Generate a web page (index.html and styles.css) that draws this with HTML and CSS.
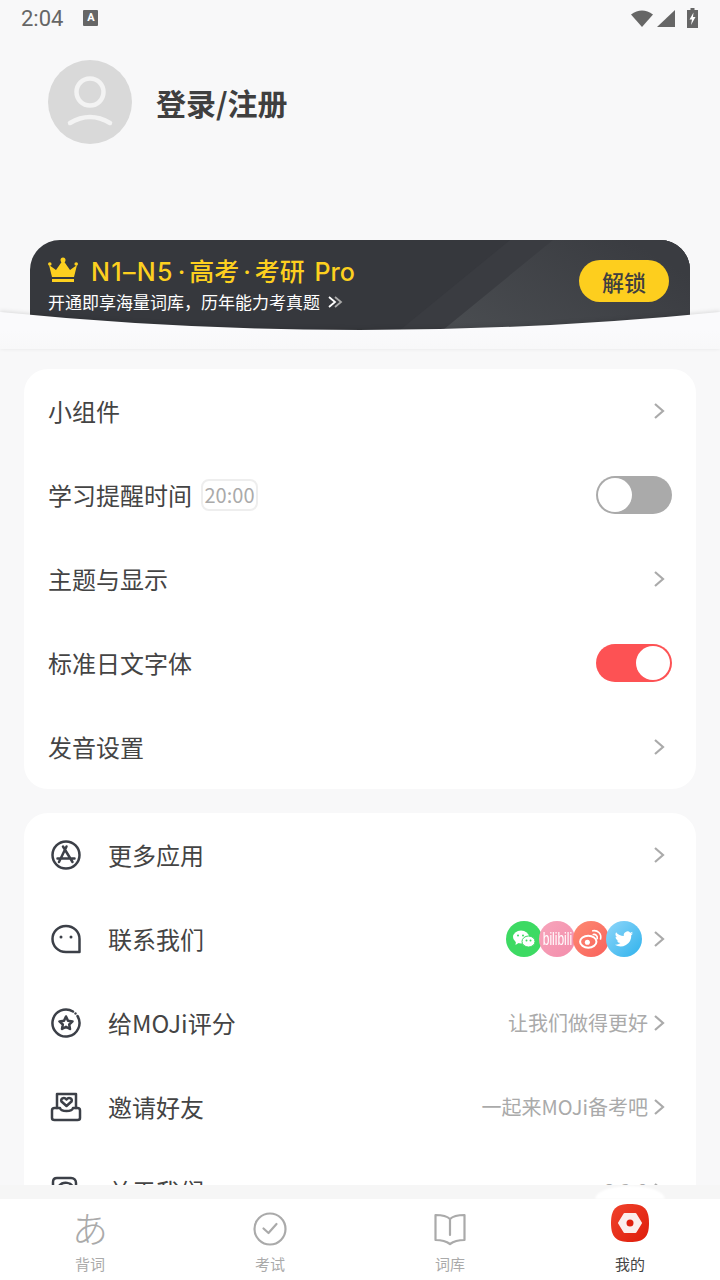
FILE: index.html
```html
<!DOCTYPE html>
<html>
    <head>
        <meta charset="utf-8">
        <title>MOJi</title>
        <link rel="stylesheet" href="styles.css">
    </head>
    <body>
        <div class="page">
            <div class="content">
                <div class="statusbar">
                    <span class="clock">2:04</span>
                    <span class="notify">A</span>
                    <span class="status-icons">
                        <svg width="22" height="17" viewBox="0 0 22 17"><path d="M0 4.500 Q11 -3.500 22 4.500 L11 17 Z" fill="#666"/></svg>
                        <svg class="signal" width="18" height="17" viewBox="0 0 18 17"><path d="M0 17 L18 0 V17 Z" fill="#666"/></svg>
                        <svg width="11" height="20" viewBox="0 0 11 20"><path d="M3.500 0 H7.500 V2 H11 V20 H0 V2 H3.500 Z" fill="#666"/><path d="M6.500 4.500 L2.500 11.500 H5 L4 17 L8.500 9 H6 Z" fill="#fff"/></svg>
                    </span>
                </div>

                <div class="profile">
                    <svg class="avatar" width="84" height="84" viewBox="0 0 84 84">
                        <circle cx="42" cy="42" r="42" fill="#d9d9d9"/>
                        <circle cx="42" cy="32" r="13.500" fill="none" stroke="#f3f3f3" stroke-width="4.500"/>
                        <path d="M22 63 Q42 51 62 63" fill="none" stroke="#f3f3f3" stroke-width="4.500" stroke-linecap="round"/>
                    </svg>
                    <span class="login">登录/注册</span>
                </div>

                <div class="promo-wrap">
                    <div class="promo">
                        <svg class="promo-stripes" width="660" height="90" viewBox="0 0 660 90">
                            <defs>
                                <linearGradient id="stripe" x1="0" y1="1" x2="1" y2="0.400">
                                    <stop offset="0" stop-color="#4a4d51"/>
                                    <stop offset="1" stop-color="#3a3c41"/>
                                </linearGradient>
                            </defs>
                            <polygon points="370,90 480,0 660,0 660,90" fill="#3a3c41"/>
                            <polygon points="413,90 523,0 660,0 660,90" fill="url(#stripe)"/>
                        </svg>
                        <div class="promo-text">
                            <div class="promo-title">
                                <svg width="30" height="26" viewBox="0 0 30 26"><path d="M1 8 L8 13 L15 3 L22 13 L29 8 L26 20 H4 Z" fill="#fdd01f"/><circle cx="15" cy="3" r="2.500" fill="#fdd01f"/><circle cx="1.800" cy="7" r="1.800" fill="#fdd01f"/><circle cx="28.200" cy="7" r="1.800" fill="#fdd01f"/><rect x="4" y="22" width="22" height="3" fill="#fdd01f"/></svg>
                                <span><span class="level">N1–N5</span><span class="sep">·</span>高考<span class="sep">·</span>考研 <span class="pro">Pro</span></span>
                            </div>
                            <div class="promo-sub">
                                <span>开通即享海量词库，历年能力考真题</span>
                                <svg width="16" height="14" viewBox="0 0 16 14"><path d="M2 2 L8 7 L2 12" fill="none" stroke="#fff" stroke-width="1.800"/><path d="M8 2 L14 7 L8 12" fill="none" stroke="#aaa" stroke-width="1.800"/></svg>
                            </div>
                        </div>
                        <div class="unlock">解锁</div>
                    </div>
                    <svg class="promo-curve" width="720" height="37" viewBox="0 0 720 37">
                        <defs>
                            <linearGradient id="curvefade" x1="0" y1="0" x2="0" y2="1">
                                <stop offset="0.500" stop-color="#fafafc"/>
                                <stop offset="1" stop-color="#f8f8f9"/>
                            </linearGradient>
                        </defs>
                        <path d="M0 0 Q360 36 720 0 V37 H0 Z" fill="url(#curvefade)"/>
                    </svg>
                </div>

                <div class="card">
                    <div class="row">
                        <span class="label">小组件</span>
                        <svg class="chevron" width="12" height="18" viewBox="0 0 12 18"><path d="M2 2 L10 9 L2 16"/></svg>
                    </div>
                    <div class="row">
                        <span class="label">学习提醒时间</span>
                        <span class="tag">20:00</span>
                        <span class="toggle"><span class="knob"></span></span>
                    </div>
                    <div class="row">
                        <span class="label">主题与显示</span>
                        <svg class="chevron" width="12" height="18" viewBox="0 0 12 18"><path d="M2 2 L10 9 L2 16"/></svg>
                    </div>
                    <div class="row">
                        <span class="label">标准日文字体</span>
                        <span class="toggle on"><span class="knob"></span></span>
                    </div>
                    <div class="row">
                        <span class="label">发音设置</span>
                        <svg class="chevron" width="12" height="18" viewBox="0 0 12 18"><path d="M2 2 L10 9 L2 16"/></svg>
                    </div>
                </div>

                <div class="card second">
                    <div class="row">
                        <svg class="row-icon" width="36" height="36" viewBox="0 0 36 36">
                            <circle cx="18" cy="18" r="13.500"/>
                            <path d="M18.500 9.500 L11 25 M15 9.500 L24.500 25 M9.500 21.500 H26.500"/>
                        </svg>
                        <span class="label">更多应用</span>
                        <svg class="chevron" width="12" height="18" viewBox="0 0 12 18"><path d="M2 2 L10 9 L2 16"/></svg>
                    </div>
                    <div class="row">
                        <svg class="row-icon" width="36" height="36" viewBox="0 0 36 36">
                            <path d="M18 5 C26 5 31.500 11 31.500 18 V31 H18 C10 31 4.500 25 4.500 18 C4.500 11 10 5 18 5 Z"/>
                            <circle class="dot" cx="13" cy="16" r="1.500"/>
                            <circle class="dot" cx="23" cy="16" r="1.500"/>
                        </svg>
                        <span class="label">联系我们</span>
                        <span class="socials">
                            <span class="social wechat">
                                <svg width="24" height="20" viewBox="0 0 24 20"><ellipse cx="9" cy="8" rx="8" ry="6.500" fill="#fff"/><path d="M4 12 L3.500 16 L8 13 Z" fill="#fff"/><ellipse cx="16.500" cy="12.500" rx="6.500" ry="5.500" fill="#fff" stroke="#3dda63"/><circle cx="14.500" cy="11.500" r="1" fill="#3dda63"/><circle cx="18.500" cy="11.500" r="1" fill="#3dda63"/><circle cx="6" cy="6.500" r="1" fill="#3dda63"/><circle cx="11" cy="6.500" r="1" fill="#3dda63"/></svg>
                            </span>
                            <span class="social bili"><span class="bili-text">bilibili</span></span>
                            <span class="social weibo">
                                <svg width="24" height="20" viewBox="0 0 26 22"><ellipse cx="10" cy="14" rx="9" ry="6.500" fill="none" stroke="#fff" stroke-width="2.200"/><circle cx="9" cy="14.500" r="2.800" fill="#fff"/><path d="M15 2 C20 1 25 5 23.500 11 M15.500 6 C18 5.500 20.500 7.500 19.800 10.500" fill="none" stroke="#fff" stroke-width="1.800" stroke-linecap="round"/></svg>
                            </span>
                            <span class="social twitter">
                                <svg width="24" height="20" viewBox="0 0 24 24"><path d="M23 5 a9 9 0 0 1 -2.600 .8 a4.500 4.500 0 0 0 2 -2.500 a9 9 0 0 1 -2.900 1.100 a4.500 4.500 0 0 0 -7.700 4.100 a12.800 12.800 0 0 1 -9.300 -4.700 a4.500 4.500 0 0 0 1.400 6 a4.500 4.500 0 0 1 -2 -.6 a4.500 4.500 0 0 0 3.600 4.500 a4.500 4.500 0 0 1 -2 .1 a4.500 4.500 0 0 0 4.200 3.100 a9 9 0 0 1 -6.700 1.900 a12.800 12.800 0 0 0 19.700 -11.400 a9 9 0 0 0 2.300 -2.400 Z" fill="#fff"/></svg>
                            </span>
                        </span>
                        <svg class="chevron" width="12" height="18" viewBox="0 0 12 18"><path d="M2 2 L10 9 L2 16"/></svg>
                    </div>
                    <div class="row">
                        <svg class="row-icon" width="36" height="36" viewBox="0 0 36 36">
                            <path d="M25 6.500 A13.500 13.500 0 1 0 29.500 11"/>
                            <path d="M18 11.500 L20 15.800 L24.500 16.400 L21.200 19.500 L22 24 L18 21.800 L14 24 L14.800 19.500 L11.500 16.400 L16 15.800 Z"/>
                            <circle class="dot" cx="27.500" cy="8.500" r="1.200"/>
                        </svg>
                        <span class="label">给MOJi评分</span>
                        <span class="hint">让我们做得更好</span>
                        <svg class="chevron" width="12" height="18" viewBox="0 0 12 18"><path d="M2 2 L10 9 L2 16"/></svg>
                    </div>
                    <div class="row">
                        <svg class="row-icon" width="36" height="36" viewBox="0 0 36 36">
                            <path d="M9 19 V5 H28 V19"/>
                            <path d="M6.500 19 H12 C13 23 24 23 25 19 H29.500 C31 19 32 20 32 21.500 V29 C32 30.500 31 31 29.500 31 H6.500 C5 31 4 30.500 4 29 V21.500 C4 20 5 19 6.500 19 Z"/>
                            <path d="M18.500 17 L13.500 12.500 C12 10 16 7.500 18.500 10.500 C21 7.500 25 10 23.500 12.500 Z"/>
                        </svg>
                        <span class="label">邀请好友</span>
                        <span class="hint">一起来MOJi备考吧</span>
                        <svg class="chevron" width="12" height="18" viewBox="0 0 12 18"><path d="M2 2 L10 9 L2 16"/></svg>
                    </div>
                    <div class="row">
                        <svg class="row-icon" width="36" height="36" viewBox="0 0 36 36">
                            <path d="M5 30 V9 C5 6 7 5 9 5 H23 C26 5 28 7 28 10 V30"/>
                            <path d="M11 13 C15 8 24 9 25 15"/>
                        </svg>
                        <span class="label">关于我们</span>
                        <span class="hint">8.2.0</span>
                        <svg class="chevron" width="12" height="18" viewBox="0 0 12 18"><path d="M2 2 L10 9 L2 16"/></svg>
                    </div>
                </div>
            </div>

            <div class="tab-shade"><span class="tab-bump"></span></div>
            <div class="tabbar">
                <div class="tab">
                    <span class="tab-glyph">あ</span>
                    <span class="tab-label">背词</span>
                </div>
                <div class="tab">
                    <svg class="tab-icon" width="38" height="38" viewBox="0 0 38 38"><circle cx="19" cy="19" r="15.500"/><path d="M12.500 18.500 L17.500 23 L25.500 14"/></svg>
                    <span class="tab-label">考试</span>
                </div>
                <div class="tab">
                    <svg class="tab-icon" width="38" height="38" viewBox="0 0 38 38"><path d="M19 9 C16 6 11 5 4.500 5 V30 C10 30 15 31 19 34 C23 31 28 30 33.500 30 V5 C27 5 22 6 19 9 V25"/></svg>
                    <span class="tab-label">词库</span>
                </div>
                <div class="tab active">
                    <svg class="tab-icon-active" width="38" height="38" viewBox="0 0 38 38">
                        <defs>
                            <linearGradient id="mine" x1="0" y1="0" x2="1" y2="1">
                                <stop offset="0" stop-color="#f0422c"/>
                                <stop offset="1" stop-color="#de1c0a"/>
                            </linearGradient>
                        </defs>
                        <path d="M19 0 C33 0 38 5 38 19 C38 33 33 38 19 38 C5 38 0 33 0 19 C0 5 5 0 19 0 Z" fill="url(#mine)"/>
                        <path d="M13.500 10 H24.500 L30 19 L24.500 28 H13.500 L8 19 Z" fill="#fbeeec" stroke="#fbeeec" stroke-width="2" stroke-linejoin="round"/>
                        <circle cx="19" cy="19" r="3.500" fill="#e0200e"/>
                    </svg>
                    <span class="tab-label">我的</span>
                </div>
            </div>
        </div>
    </body>
</html>
```

FILE: styles.css
```css
* {
    box-sizing: border-box;
}
body {
    margin: 0;
    font-family: "Noto Sans CJK SC", "Noto Sans", sans-serif;
    color: #444;
}
.page {
    width: 720px;
    height: 1280px;
    display: flex;
    flex-direction: column;
    overflow: hidden;
    background: #f8f8f9;
}
.content {
    height: 1185px;
    flex: none;
    overflow: hidden;
}

/* status bar */
.statusbar {
    height: 36px;
    padding: 0 22px 0 21px;
    display: flex;
    align-items: center;
}
.clock {
    font-family: Roboto, sans-serif;
    font-size: 22px;
    color: #666;
}
.notify {
    width: 15px;
    height: 16px;
    margin-left: 20px;
    background: #666;
    border-radius: 1px;
    color: #fff;
    font-family: Roboto, sans-serif;
    font-size: 11px;
    font-weight: 700;
    line-height: 15px;
    text-align: center;
}
.status-icons {
    margin-left: auto;
    display: flex;
    align-items: center;
    gap: 12px;
}
.signal {
    margin-left: -8px;
}

/* profile */
.profile {
    margin-top: 24px;
    padding-left: 48px;
    display: flex;
    align-items: center;
    gap: 24px;
}
.login {
    font-size: 30px;
    font-weight: 700;
    color: #3f3f3f;
}

/* promo banner */
.promo-wrap {
    position: relative;
    margin-top: 96px;
    padding: 0 30px;
}
.promo {
    position: relative;
    height: 90px;
    padding: 20px 21px 0 18px;
    display: flex;
    justify-content: space-between;
    align-items: flex-start;
    background: #36383d;
    border-radius: 30px 30px 0 0;
    overflow: hidden;
}
.promo-stripes {
    position: absolute;
    left: 0;
    top: 0;
}
.promo-text {
    position: relative;
    flex: 1;
}
.promo-title {
    height: 20px;
    display: flex;
    align-items: center;
    gap: 13px;
    font-family: Inter, "Noto Sans CJK SC", sans-serif;
    font-size: 25px;
    font-weight: 500;
    color: #fdd01f;
    white-space: nowrap;
}
.level {
    letter-spacing: 1.300px;
}
.sep {
    margin: 0 4px;
}
.pro {
    margin-left: 3px;
}
.promo-sub {
    margin-top: 10px;
    display: flex;
    align-items: center;
    gap: 7px;
    font-size: 17px;
    line-height: 24px;
    color: #fff;
}
.unlock {
    position: relative;
    width: 90px;
    height: 42px;
    border-radius: 21px;
    background: #fdce1e;
    font-size: 22px;
    font-weight: 500;
    line-height: 42px;
    text-align: center;
    color: #3f3f3f;
}
.promo-curve {
    position: absolute;
    left: 0;
    top: 72px;
    filter: drop-shadow(0 -1px 2px rgba(0, 0, 0, 0.12));
}

/* setting cards */
.card {
    margin: 39px 24px 0;
    background: #fff;
    border-radius: 24px;
    position: relative;
}
.card.second {
    margin-top: 24px;
    padding-bottom: 30px;
}
.row {
    height: 84px;
    padding: 0 24px;
    display: flex;
    align-items: center;
}
.label {
    margin-top: -2px;
    font-size: 24px;
    color: #444;
}
.chevron {
    margin-left: auto;
    margin-right: 7px;
    fill: none;
    stroke: #aaa;
    stroke-width: 2.200;
}
.hint + .chevron {
    margin-left: 5px;
}
.socials + .chevron {
    margin-left: 11px;
}
.hint {
    margin-left: auto;
    margin-top: -2px;
    font-size: 20px;
    color: #aaa;
}
.tag {
    margin-left: 9px;
    width: 57px;
    height: 32px;
    border: 2px solid #eee;
    border-radius: 8px;
    font-size: 20px;
    line-height: 28px;
    text-align: center;
    color: #aaa;
}
.toggle {
    margin-left: auto;
    width: 76px;
    height: 38px;
    padding: 2px;
    border-radius: 19px;
    background: #aaa;
    display: flex;
}
.toggle.on {
    background: #fd5254;
    justify-content: flex-end;
}
.knob {
    width: 34px;
    height: 34px;
    border-radius: 50%;
    background: #fff;
}
.row-icon {
    margin-right: 24px;
    fill: none;
    stroke: #3c4048;
    stroke-width: 2.500;
    stroke-linecap: round;
    stroke-linejoin: round;
}
.row-icon .dot {
    fill: #3c4048;
    stroke: none;
}

/* social badges */
.socials {
    margin-left: auto;
    display: flex;
}
.social {
    width: 36px;
    height: 36px;
    margin-left: -2.700px;
    border-radius: 50%;
    display: flex;
    align-items: center;
    justify-content: center;
    color: #fff;
}
.wechat {
    background: #3dda63;
}
.bili {
    background: linear-gradient(135deg, #f7a5bb, #f38dab);
    font-family: "Liberation Sans", sans-serif;
    font-size: 12px;
}
.bili-text {
    display: inline-block;
    transform: scaleY(1.500);
}
.weibo {
    background: linear-gradient(135deg, #fd8a72, #f9615c);
}
.twitter {
    background: linear-gradient(135deg, #8fd6fa, #2fb2ec);
}

/* bottom tabs */
.tab-shade {
    position: relative;
    height: 14px;
    flex: none;
    background: #f6f6f6;
}
.tab-bump {
    position: absolute;
    left: 595px;
    top: 1px;
    width: 70px;
    height: 13px;
    border-radius: 50% 50% 0 0 / 100% 100% 0 0;
    background: #fff;
    filter: blur(1px);
}
.tabbar {
    flex: 1;
    display: flex;
    background: #fff;
}
.tab {
    flex: 1;
    display: flex;
    flex-direction: column;
    align-items: center;
    padding-top: 11px;
}
.tab-glyph {
    height: 38px;
    margin-top: -2px;
    margin-bottom: 2px;
    font-size: 36px;
    font-weight: 300;
    line-height: 38px;
    color: #aaa;
}
.tab-icon {
    fill: none;
    stroke: #aaa;
    stroke-width: 2.200;
    stroke-linecap: round;
    stroke-linejoin: round;
}
.tab-icon-active {
    margin-top: -6px;
    margin-bottom: 6px;
}
.tab-label {
    margin-top: 5px;
    font-size: 15px;
    line-height: 22px;
    color: #aaa;
}
.tab.active .tab-label {
    color: #444;
}
```
